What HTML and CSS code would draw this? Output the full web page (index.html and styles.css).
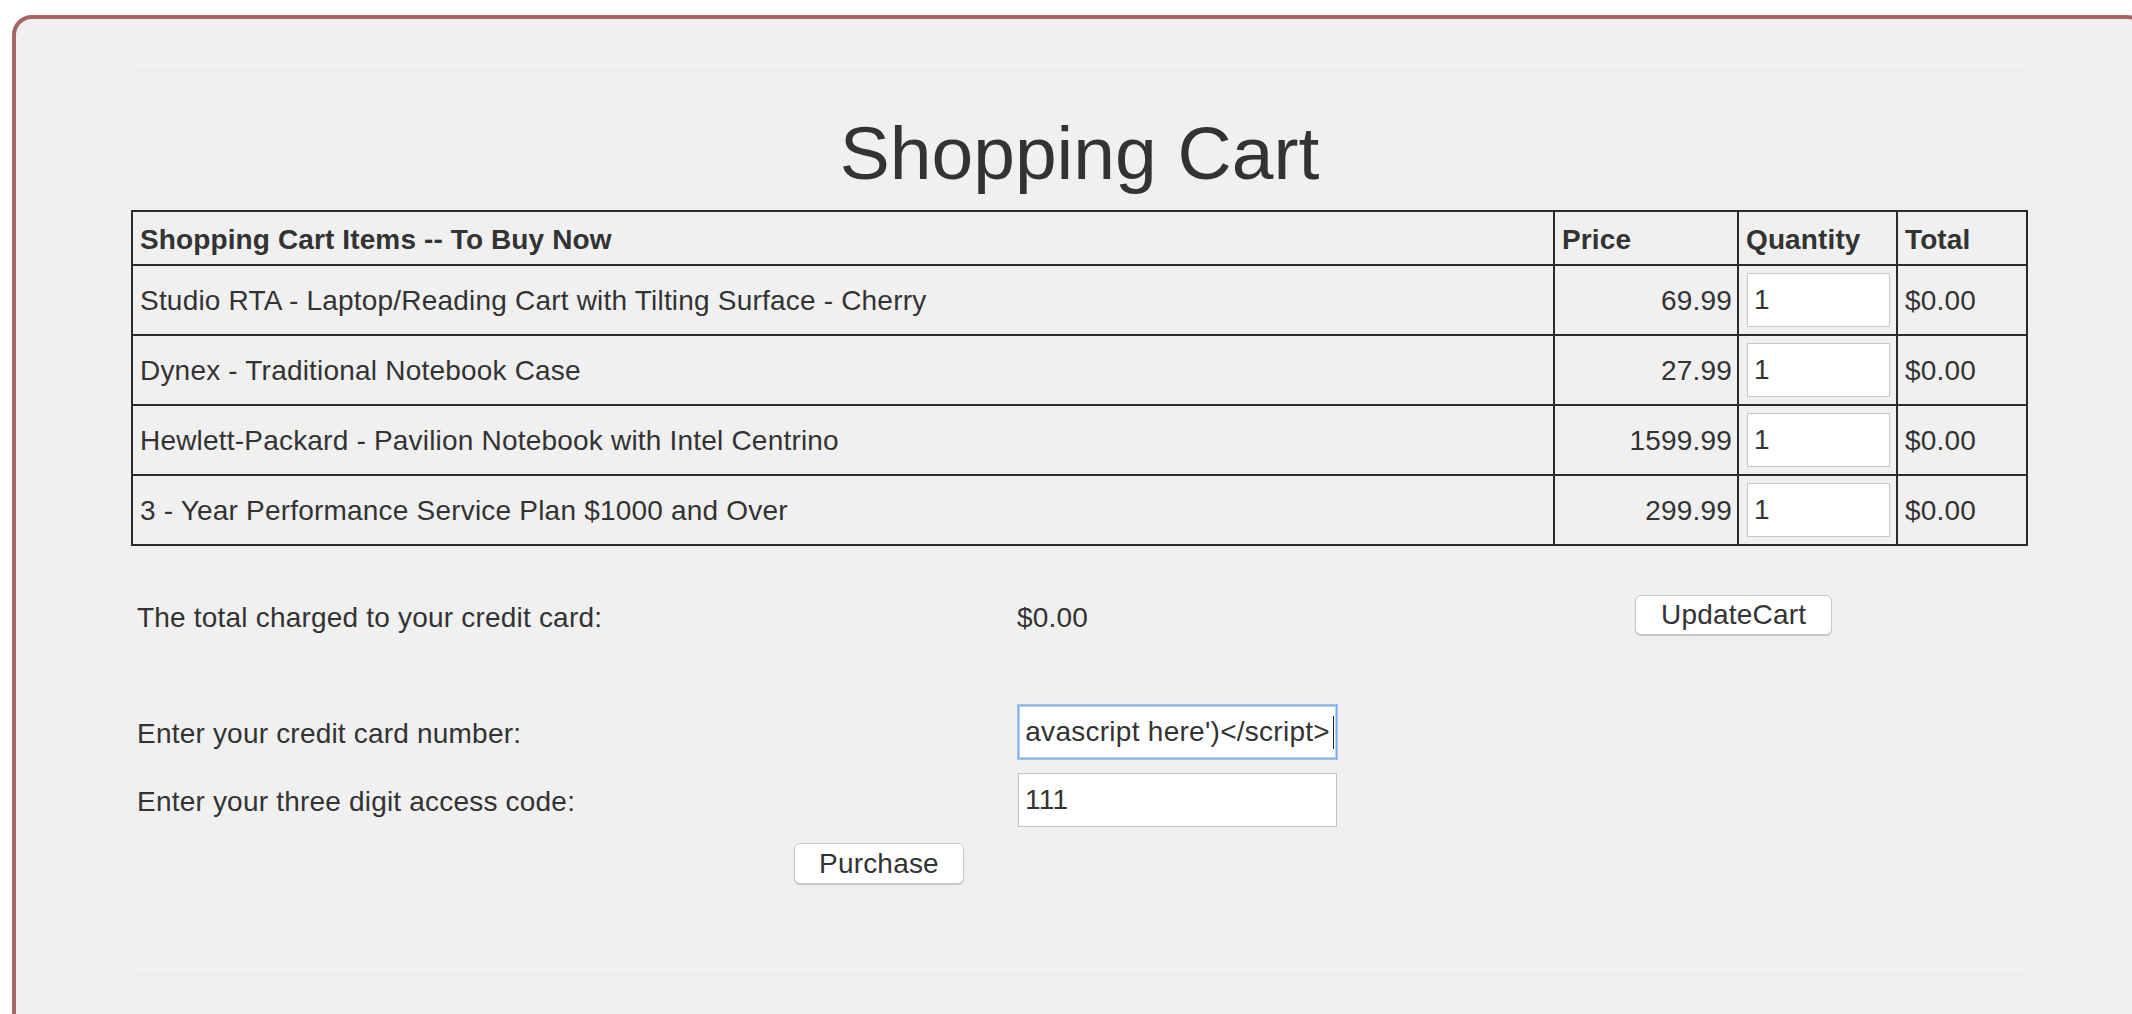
FILE: index.html
```html
<!DOCTYPE html>
<html lang="en">
<head>
<meta charset="utf-8">
<title>Shopping Cart</title>
<link rel="stylesheet" href="styles.css">
</head>
<body>
<div class="frame">
  <div class="sheet">
    <h1 class="title">Shopping Cart</h1>
    <table class="cart">
      <colgroup>
        <col class="c-item"><col class="c-price"><col class="c-qty"><col class="c-total">
      </colgroup>
      <thead>
        <tr><th>Shopping Cart Items -- To Buy Now</th><th>Price</th><th>Quantity</th><th>Total</th></tr>
      </thead>
      <tbody>
        <tr><td>Studio RTA - Laptop/Reading Cart with Tilting Surface - Cherry</td><td class="price">69.99</td><td class="qty"><input class="qty-input" type="text" value="1"></td><td>$0.00</td></tr>
        <tr><td>Dynex - Traditional Notebook Case</td><td class="price">27.99</td><td class="qty"><input class="qty-input" type="text" value="1"></td><td>$0.00</td></tr>
        <tr><td>Hewlett-Packard - Pavilion Notebook with Intel Centrino</td><td class="price">1599.99</td><td class="qty"><input class="qty-input" type="text" value="1"></td><td>$0.00</td></tr>
        <tr><td>3 - Year Performance Service Plan $1000 and Over</td><td class="price">299.99</td><td class="qty"><input class="qty-input" type="text" value="1"></td><td>$0.00</td></tr>
      </tbody>
    </table>
    <div class="checkout">
      <div class="line total-line">
        <span class="cell-text">The total charged to your credit card:</span>
        <span class="cell-text">$0.00</span>
        <button class="btn" type="button">UpdateCart</button>
      </div>
      <div class="line entry-line">
        <label class="cell-label" for="card">Enter your credit card number:</label>
        <span class="field"><input id="card" class="text-input card-input is-focused" type="text" value="&lt;script&gt;alert('javascript here')&lt;/script&gt;"><span class="caret"></span></span>
      </div>
      <div class="line entry-line">
        <label class="cell-label" for="code">Enter your three digit access code:</label>
        <span class="field"><input id="code" class="text-input" type="text" value="111"></span>
      </div>
      <div class="purchase-line">
        <button class="btn btn-purchase" type="button">Purchase</button>
      </div>
    </div>
  </div>
</div>
<script src="app.js"></script>
</body>
</html>
```
FILE: styles.css
```css
html, body {
  margin: 0;
  overflow: hidden;
  background: #ffffff;
}
body {
  font-family: "Liberation Sans", Arial, Helvetica, sans-serif;
  font-size: 28px;
  letter-spacing: 0.2px;
  color: #333333;
}
.frame {
  box-sizing: border-box;
  margin: 15px 0 0 12px;
  width: 2135px;
  height: 1020px;
  padding-top: 51px;
  border: 4px solid #a96565;
  border-radius: 20px;
  background: #f0f0f0;
}
.sheet {
  width: 1897px;
  height: 903px;
  margin: 0 auto;
  border-top: 1px solid #e7e7e7;
  border-bottom: 1px solid #e7e7e7;
}
.title {
  margin: 40px 0 15px;
  font-size: 75px;
  font-weight: 400;
  letter-spacing: 0;
  line-height: 84px;
  text-align: center;
  color: #333333;
}
.cart {
  width: 100%;
  border-collapse: collapse;
  table-layout: fixed;
  border: 2px solid #2b2b2b;
}
.c-item { width: 1422px; }
.c-price { width: 184px; }
.c-qty { width: 159px; }
.c-total { width: 130px; }
.cart th, .cart td {
  border: 2px solid #2b2b2b;
  padding: 8px 6px 6px 7px;
  line-height: 32px;
  text-align: left;
  vertical-align: middle;
  white-space: nowrap;
}
.cart th {
  padding-top: 12px;
  padding-bottom: 8px;
  font-weight: 700;
  letter-spacing: 0.12px;
}
.cart td.price {
  text-align: right;
  padding-right: 5px;
}
.cart td.qty {
  padding: 7px 6px 7px 8px;
}
.qty-input {
  display: block;
  box-sizing: border-box;
  width: 100%;
  height: 54px;
  margin: 0;
  padding: 0 6px;
  border: 1px solid #c6c6c6;
  border-radius: 0;
  background: #ffffff;
  font: inherit;
  letter-spacing: 0.2px;
  color: #333333;
  outline: none;
}
.checkout {
  margin-top: 49px;
  padding-left: 6px;
}
.line {
  display: grid;
  grid-template-columns: 880px 618px auto;
  align-items: center;
  line-height: 32px;
}
.total-line {
  height: 40px;
  margin-bottom: 70px;
}
.total-line .cell-text {
  padding-top: 5px;
}
.cell-label {
  padding-top: 3px;
}
.entry-line + .entry-line {
  margin-top: 14px;
}
.field {
  position: relative;
  display: block;
  width: 319px;
  margin-left: 1px;
}
.text-input {
  display: block;
  box-sizing: border-box;
  width: 319px;
  height: 54px;
  margin: 0;
  padding: 0 6px;
  border: 1px solid #c3c3c3;
  border-radius: 0;
  background: #ffffff;
  font: inherit;
  letter-spacing: 0.2px;
  color: #333333;
  outline: none;
}
.text-input.card-input {
  letter-spacing: 0.27px;
}
.text-input.is-focused {
  border-color: #7eaee8;
  box-shadow: 0 0 0 1px #a6c8f1, inset 0 0 0 1px #b9d4f4;
}
.caret {
  position: absolute;
  right: 3px;
  top: 11px;
  width: 1px;
  height: 33px;
  background: #222222;
}
.btn {
  justify-self: start;
  box-sizing: border-box;
  height: 40px;
  margin: 0;
  padding: 0 25px;
  border: 1px solid #c8c8c8;
  border-radius: 6px;
  background: #ffffff;
  box-shadow: 0 1px 1px rgba(0, 0, 0, 0.18);
  font: inherit;
  letter-spacing: 0.2px;
  line-height: 1;
  color: #333333;
}
.purchase-line {
  margin-top: 16px;
  padding-left: 657px;
}
.btn-purchase {
  height: 41px;
  padding: 0 24px;
}
```
FILE: app.js
```js
var card = document.getElementById('card');
if (card) {
  card.scrollLeft = card.scrollWidth;
}
```
